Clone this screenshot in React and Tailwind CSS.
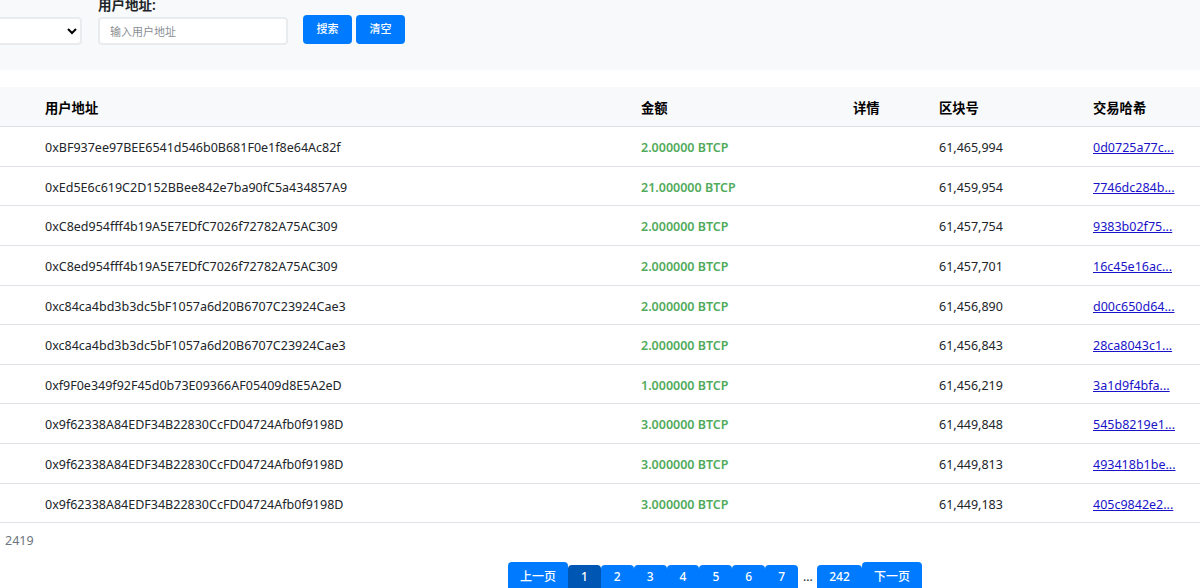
const font = { fontFamily: '"Noto Sans", "Noto Sans CJK SC", sans-serif' };

const rows = [
  ["0xBF937ee97BEE6541d546b0B681F0e1f8e64Ac82f", "2.000000 BTCP", "61,465,994", "0d0725a77c..."],
  ["0xEd5E6c619C2D152BBee842e7ba90fC5a434857A9", "21.000000 BTCP", "61,459,954", "7746dc284b..."],
  ["0xC8ed954fff4b19A5E7EDfC7026f72782A75AC309", "2.000000 BTCP", "61,457,754", "9383b02f75..."],
  ["0xC8ed954fff4b19A5E7EDfC7026f72782A75AC309", "2.000000 BTCP", "61,457,701", "16c45e16ac..."],
  ["0xc84ca4bd3b3dc5bF1057a6d20B6707C23924Cae3", "2.000000 BTCP", "61,456,890", "d00c650d64..."],
  ["0xc84ca4bd3b3dc5bF1057a6d20B6707C23924Cae3", "2.000000 BTCP", "61,456,843", "28ca8043c1..."],
  ["0xf9F0e349f92F45d0b73E09366AF05409d8E5A2eD", "1.000000 BTCP", "61,456,219", "3a1d9f4bfa..."],
  ["0x9f62338A84EDF34B22830CcFD04724Afb0f9198D", "3.000000 BTCP", "61,449,848", "545b8219e1..."],
  ["0x9f62338A84EDF34B22830CcFD04724Afb0f9198D", "3.000000 BTCP", "61,449,813", "493418b1be..."],
  ["0x9f62338A84EDF34B22830CcFD04724Afb0f9198D", "3.000000 BTCP", "61,449,183", "405c9842e2..."],
];

const grid = "grid grid-cols-[641px_212px_86px_154px_107px] items-center border-b border-[#dee2e6]";

const PageBtn = ({ children, active }) => (
  <button className={`h-[24px] w-[32.86px] rounded-t text-[12px] font-medium text-white ${active ? "bg-[#0056b3]" : "bg-[#007bff]"}`}>
    {children}
  </button>
);

const App = () => {
  return (
    <div style={font} className="h-[588px] w-[1200px] overflow-hidden bg-white text-[12.5px] text-[#212529]">
      {/* filter panel */}
      <div className="flex h-[70px] items-start bg-[#f8f9fa]">
        <select className="-ml-[4px] mt-[17px] h-[28px] w-[86px] rounded border-2 border-[#e9ecef] bg-white text-black"></select>
        <div className="ml-[16px]">
          <div className="-mt-[6px] h-[23px] text-[13.5px] font-semibold leading-[22px]">用户地址:</div>
          <input
            placeholder="输入用户地址"
            className="h-[28px] w-[190px] rounded border-2 border-[#e9ecef] bg-white px-[10px] text-[11px] placeholder:text-[#8a8f94]"
          />
        </div>
        <button className="ml-[15px] mt-[15px] h-[29px] w-[49px] rounded bg-[#007bff] text-[11px] font-medium text-white">搜索</button>
        <button className="ml-[4px] mt-[15px] h-[29px] w-[49px] rounded bg-[#007bff] text-[11px] font-medium text-white">清空</button>
      </div>

      {/* table */}
      <div className="mt-[17px]">
        <div className={`${grid} h-[40.3px] bg-[#f8f9fa] pt-[4px] text-[13.3px] font-bold text-black`}>
          <div className="pl-[45px]">用户地址</div>
          <div>金额</div>
          <div>详情</div>
          <div>区块号</div>
          <div>交易哈希</div>
        </div>
        {rows.map((r, i) => (
          <div key={i} className={`${grid} h-[39.6px] pt-[4px]`}>
            <div className="pl-[45px]">{r[0]}</div>
            <div className="font-semibold text-[#52ab5c]">{r[1]}</div>
            <div></div>
            <div>{r[2]}</div>
            <a href="#" className="text-[#1a12c8] underline">{r[3]}</a>
          </div>
        ))}
      </div>

      <div className="mt-[9px] pl-[5px] text-[#6c757d]">2419</div>

      {/* pagination */}
      <div className="mt-[11px] flex items-center pl-[508px]">
        <button className="h-[30px] w-[60px] rounded-t bg-[#007bff] text-[12px] font-medium text-white">上一页</button>
        <PageBtn active>1</PageBtn>
        <PageBtn>2</PageBtn>
        <PageBtn>3</PageBtn>
        <PageBtn>4</PageBtn>
        <PageBtn>5</PageBtn>
        <PageBtn>6</PageBtn>
        <PageBtn>7</PageBtn>
        <span className="mx-[5px] w-[9px] text-[12px]">...</span>
        <button className="h-[24px] w-[45px] rounded-t bg-[#007bff] text-[12px] font-medium text-white">242</button>
        <button className="h-[30px] w-[60px] rounded-t bg-[#007bff] text-[12px] font-medium text-white">下一页</button>
      </div>
    </div>
  );
};

export default App;
